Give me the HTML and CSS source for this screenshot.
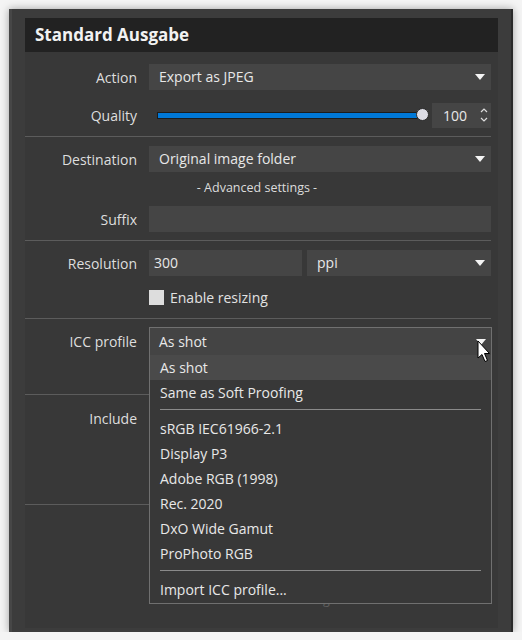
FILE: index.html
```html
<!DOCTYPE html>
<html lang="en">
<head>
  <meta charset="UTF-8">
  <title>Standard Ausgabe</title>
  <link rel="stylesheet" href="styles.css">
</head>
<body>
  <div class="window">
    <div class="panel">
      <div class="panel-title">Standard Ausgabe</div>

      <div class="section s-output">
        <div class="row">
          <div class="label">Action</div>
          <div class="select">Export as JPEG<span class="arrow"></span></div>
        </div>
        <div class="row">
          <div class="label">Quality</div>
          <div class="slider">
            <div class="track"><div class="thumb"></div></div>
          </div>
          <div class="spin">100
            <svg class="spin-icon" width="8" height="16" viewBox="0 0 8 16">
              <path d="M1 5 L4 2 L7 5 M1 11 L4 14 L7 11" fill="none" stroke="#ddd" stroke-width="1.2"/>
            </svg>
          </div>
        </div>
      </div>

      <div class="section s-dest">
        <div class="row">
          <div class="label">Destination</div>
          <div class="select">Original image folder<span class="arrow"></span></div>
        </div>
        <div class="advanced">- Advanced settings -</div>
        <div class="row">
          <div class="label">Suffix</div>
          <div class="input"></div>
        </div>
      </div>

      <div class="section s-res">
        <div class="row">
          <div class="label">Resolution</div>
          <div class="input res-value">300</div>
          <div class="select">ppi<span class="arrow"></span></div>
        </div>
        <div class="row">
          <div class="label"></div>
          <div class="check"><span class="box"></span>Enable resizing</div>
        </div>
      </div>

      <div class="section s-icc">
        <div class="row row-icc">
          <div class="label">ICC profile</div>
        </div>
      </div>

      <div class="section s-include">
        <div class="row">
          <div class="label">Include</div>
        </div>
      </div>

      <div class="section s-rest">
        <div class="note">of their own watermark settings.</div>
      </div>

      <!-- open combo box -->
      <div class="popup">
        <div class="popup-head">As shot<span class="arrow"></span></div>
        <div class="item current">As shot</div>
        <div class="item">Same as Soft Proofing</div>
        <div class="divider"></div>
        <div class="item">sRGB IEC61966-2.1</div>
        <div class="item">Display P3</div>
        <div class="item">Adobe RGB (1998)</div>
        <div class="item">Rec. 2020</div>
        <div class="item">DxO Wide Gamut</div>
        <div class="item">ProPhoto RGB</div>
        <div class="divider"></div>
        <div class="item">Import ICC profile...</div>
      </div>

      <svg class="cursor" width="14" height="24" viewBox="0 0 14 24">
        <path d="M1 1 L1 18 L5 14.5 L8 21.5 L10.5 20.5 L7.5 13.5 L12.5 13.5 Z" fill="#fff" stroke="#000" stroke-width="1" stroke-linejoin="miter"/>
      </svg>
    </div>
  </div>
</body>
</html>
```

FILE: styles.css
```css
body {
  margin: 0;
  background: #f4f4f4;
  font-family: "Open Sans", "Noto Sans", sans-serif;
  font-size: 14px;
  color: #e8e8e8;
}

.window {
  margin: 9px 0 0 9px;
  width: 504px;
  height: 623px;
  box-sizing: border-box;
  padding: 9px 13px 4px 13px;
  background: #3c3c3c;
  border-left: 3px solid #474747;
  border-right: 2px solid #2a2a2a;
  box-shadow: 0 0 8px rgba(0, 0, 0, 0.35);
}

.panel {
  position: relative;
  height: 610px;
  background: #383838;
}

.panel-title {
  height: 34px;
  line-height: 34px;
  padding-left: 10px;
  background: #222;
  color: #f2f2f2;
  font-size: 17px;
  font-weight: 700;
}

.section {
  display: flex;
  flex-direction: column;
  border-bottom: 1px solid #5c5c5c;
  margin-right: 7px;
}

.s-output {
  padding: 12px 0 8px;
  gap: 12px;
  height: 85px;
  box-sizing: border-box;
}

.s-dest {
  padding: 9px 0 8px;
  height: 104px;
  box-sizing: border-box;
}

.s-res {
  padding: 9px 0 8px;
  gap: 8px;
  height: 78px;
  box-sizing: border-box;
}

.s-icc {
  padding-top: 8px;
  height: 76px;
  box-sizing: border-box;
}

.s-include {
  padding-top: 10px;
  height: 110px;
  box-sizing: border-box;
}

.s-rest {
  border-bottom: none;
  padding-top: 86px;
}

.row {
  display: flex;
  align-items: center;
  height: 26px;
}

.row-icc {
  height: 28px;
}

.label {
  flex: 0 0 112px;
  padding-right: 12px;
  text-align: right;
  color: #dedede;
}

.select,
.input {
  position: relative;
  flex: 1;
  height: 26px;
  line-height: 26px;
  padding-left: 10px;
  background: #454545;
}

.arrow {
  position: absolute;
  right: 6px;
  top: 10px;
  width: 0;
  height: 0;
  border-left: 5px solid transparent;
  border-right: 5px solid transparent;
  border-top: 6px solid #f4f4f4;
}

.slider {
  flex: 1;
  padding: 0 5px 0 8px;
}

.track {
  position: relative;
  height: 5px;
  background: #0078d7;
  border: 1px solid #1c1c1c;
}

.thumb {
  position: absolute;
  right: -7px;
  top: -5px;
  width: 13px;
  height: 13px;
  border-radius: 50%;
  background: #dcdce4;
  border: 1px solid #2a2a2a;
  box-sizing: border-box;
}

.spin {
  flex: 0 0 59px;
  margin-left: 4px;
  height: 25px;
  line-height: 25px;
  background: #454545;
  box-sizing: border-box;
  padding-left: 11px;
  display: flex;
  align-items: center;
  justify-content: space-between;
  padding-right: 3px;
}

.advanced {
  height: 18px;
  line-height: 18px;
  margin: 7px 0 9px;
  text-align: center;
  font-size: 12.5px;
  color: #dcdcdc;
  padding-right: 2px;
}

.res-value {
  flex: 0 0 153px;
  box-sizing: border-box;
  margin-right: 5px;
  padding-left: 5px;
}

.check {
  display: flex;
  align-items: center;
  gap: 6px;
  color: #e2e2e2;
}

.box {
  width: 15px;
  height: 15px;
  background: #dddddd;
}

.note {
  margin-left: 125px;
  font-size: 12.5px;
  color: #5f5f5f;
}

.popup {
  position: absolute;
  left: 124px;
  top: 309px;
  width: 343px;
  box-sizing: border-box;
  border: 1px solid #707070;
  background: #383838;
  padding-bottom: 1px;
}

.popup-head {
  position: relative;
  height: 27px;
  line-height: 27px;
  padding-left: 9px;
  background: #444;
}

.popup-head .arrow {
  right: 5px;
  top: 11px;
}

.item {
  height: 25px;
  line-height: 25px;
  padding-left: 10px;
}

.item.current {
  background: #4a4a4a;
}

.divider {
  height: 1px;
  margin: 4px 10px 6px;
  background: #8a8a8a;
}

.cursor {
  position: absolute;
  left: 452px;
  top: 322px;
}
```
